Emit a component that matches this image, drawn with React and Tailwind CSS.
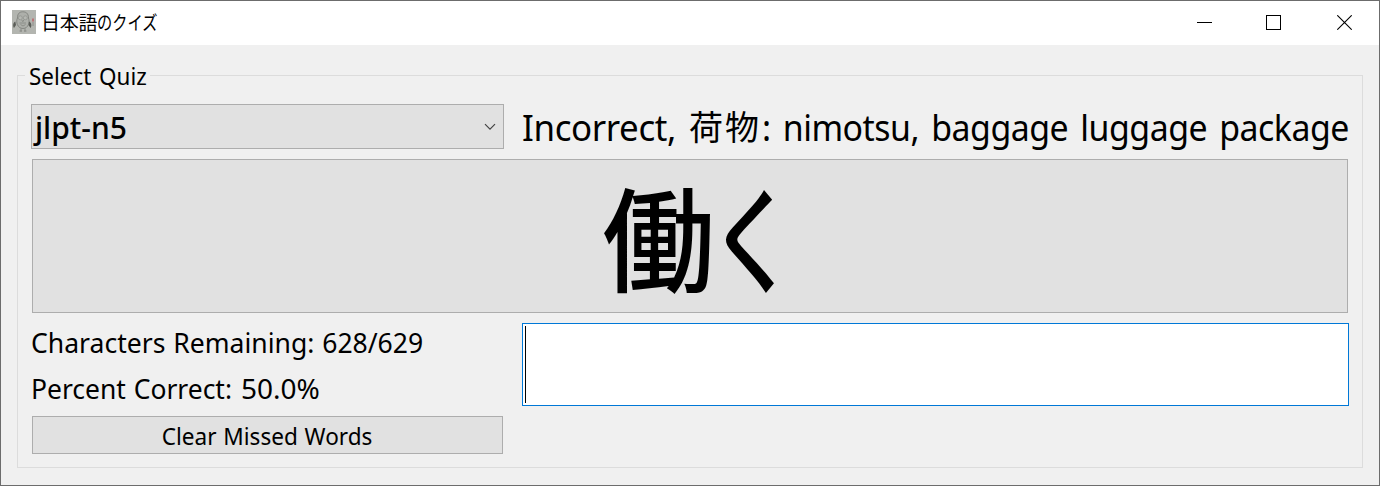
function OwlIcon() {
  return (
    <svg width="24" height="24" viewBox="0 0 24 24" className="-mt-[2px] ml-[11px] shrink-0">
      <rect width="24" height="24" fill="#b3b5b0" />
      <path d="M5.500 8C5.500 3 8 1.800 10.800 1.800S16.500 3 16.500 8C18 12 16.500 18.500 11 18.500S3.500 12 5.500 8Z" fill="#adafaa" stroke="#858782" strokeWidth="1" />
      <path d="M3.300 11.500C1 12.500 .6 16 2 18L4 15ZM17 11.500C19.500 12.500 20 16 18.500 18L16.500 15Z" fill="#5a5c57" />
      <circle cx="8.300" cy="7.800" r="2" fill="#b5b7b2" stroke="#92948f" strokeWidth=".8" />
      <circle cx="13.300" cy="7.800" r="2" fill="#b5b7b2" stroke="#92948f" strokeWidth=".8" />
      <path d="M9.800 10L10.800 11.800L11.800 10M7.500 13H14M8.500 14.500L11 16L13.500 14.500" fill="none" stroke="#898b86" strokeWidth=".9" />
      <path d="M9 18.500V21.500M7.500 21H10M13 18.500V21.500M12 21H14.500" stroke="#858782" strokeWidth=".9" fill="none" />
      <path d="M21 12V16" stroke="#858782" strokeWidth=".8" />
      <rect x="20" y="8.500" width="2" height="3" fill="#ba7478" />
    </svg>
  );
}

function TitleBar() {
  return (
    <header className="flex h-[44px] shrink-0 items-center bg-white">
      <OwlIcon />
      <h1 className="mb-[2px] ml-[5px] flex flex-1 whitespace-nowrap font-['Noto_Sans_CJK_JP',sans-serif] text-[19px] leading-[42px]">
        <span className="tracking-[-0.3px]">日本語</span>
        <span className="origin-left scale-x-[0.8]">のクイズ</span>
      </h1>
      <div className="flex items-center">
        <button className="flex h-[44px] w-[69px] items-center justify-center pb-[2px]" aria-label="Minimize">
          <svg width="15" height="15" shapeRendering="crispEdges"><path d="M0 7.500H15" stroke="#000" /></svg>
        </button>
        <button className="flex h-[44px] w-[69px] items-center justify-center pb-[2px]" aria-label="Maximize">
          <svg width="15" height="15" shapeRendering="crispEdges"><rect x=".5" y=".5" width="14" height="14" fill="none" stroke="#000" /></svg>
        </button>
        <button className="flex h-[44px] w-[71px] items-center justify-center pb-px pl-[2px]" aria-label="Close">
          <svg width="15" height="15"><path d="M.3.3L14.700 14.700M14.700.3L.3 14.700" stroke="#000" strokeWidth="1.100" /></svg>
        </button>
      </div>
    </header>
  );
}

export default function App() {
  return (
    <div className="flex h-[486px] w-[1380px] flex-col overflow-hidden border border-[#6c6c6c] bg-[#f0f0f0] font-['Noto_Sans','Noto_Sans_CJK_JP',sans-serif] text-black">
      <TitleBar />
      <fieldset className="mx-[16px] mt-[15px] h-[408px] min-w-0 border border-[#dcdcdc]">
        <legend className="ml-[7px] h-[31px] w-[125px] px-[4px] text-[24px] leading-[32px] whitespace-nowrap">
          <span className="inline-block origin-left scale-x-[0.935] [word-spacing:2px]">Select Quiz</span>
        </legend>
        <div className="flex flex-col px-[13px] pt-[13px]">
          <div className="flex h-[45px] gap-[18px]">
            <button className="flex w-[473px] shrink-0 items-center justify-between border border-[#adadad] bg-[#e1e1e1] pr-[7px] pl-[3px] text-[30px] leading-[43px]">
              <span className="pt-[2px] font-medium">jlpt-n5</span>
              <svg width="12" height="8" viewBox="0 0 12 8" fill="none"><path d="M1 1.200L6 6.200L11 1.200" stroke="#444" strokeWidth="1.200" /></svg>
            </button>
            <p className="flex w-[827px] text-[36px] leading-[47px] whitespace-nowrap">
              <span className="w-[167px] shrink-0 origin-left scale-x-[0.97] tracking-[-0.4px]">Incorrect,</span>
              <span className="w-[73px] shrink-0 text-[34px] tracking-[2px]">荷物</span>
              <span className="origin-left scale-x-[0.94] tracking-[-0.5px] [word-spacing:4px]">: nimotsu, baggage luggage package</span>
            </p>
          </div>
          <button className="mt-[10px] mr-px ml-px flex h-[154px] items-center justify-center border border-[#adadad] bg-[#e1e1e1] font-['Noto_Sans_CJK_JP',sans-serif] text-[113px] leading-[148px] font-medium">
            <span className="flex h-[152px] w-[176px]">
              <span className="w-[113px] shrink-0">働</span>
              <span className="-ml-[6px] origin-left scale-x-[0.78] scale-y-[1.03]">く</span>
            </span>
          </button>
          <div className="mt-[10px] flex gap-[18px]">
            <div className="flex w-[473px] shrink-0 flex-col">
              <p className="h-[41px] text-[28px] leading-[38px] whitespace-nowrap">
                <span className="inline-block origin-left scale-x-[0.948] [word-spacing:1px]">Characters Remaining: 628/629</span>
              </p>
              <p className="mt-[5px] flex h-[41px] text-[28px] leading-[38px] whitespace-nowrap">
                <span className="w-[210px] shrink-0 origin-left scale-x-[0.945] [word-spacing:1px]">Percent Correct:</span>
                <span>50.0%</span>
              </p>
              <button className="mt-[6px] mr-px ml-px h-[38px] border border-[#adadad] bg-[#e1e1e1] text-[24px] leading-[38px]">
                <span className="inline-block scale-x-[0.94] [word-spacing:1px]">Clear Missed Words</span>
              </button>
            </div>
            <div className="flex h-[83px] w-[827px] shrink-0 border border-[#0078d7] bg-white p-[2px]">
              <span className="h-[77px] w-px bg-black" />
            </div>
          </div>
        </div>
      </fieldset>
    </div>
  );
}
